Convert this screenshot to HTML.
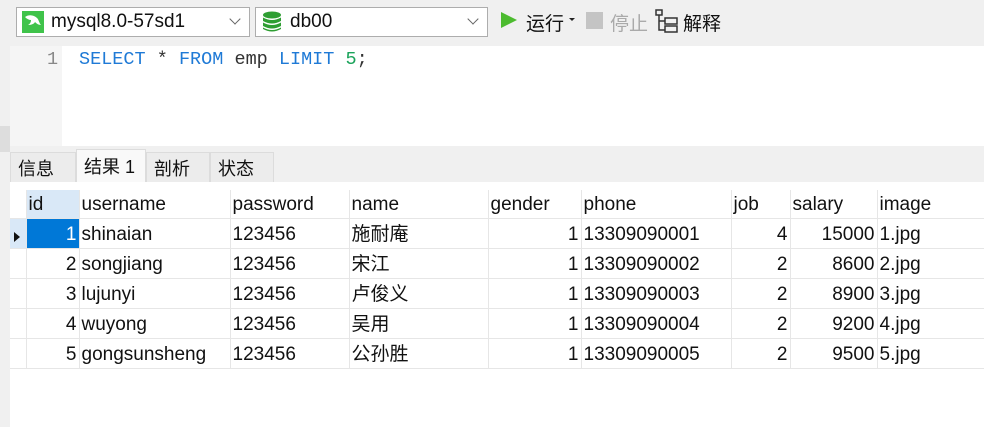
<!DOCTYPE html>
<html><head><meta charset="utf-8"><style>
*{margin:0;padding:0;box-sizing:border-box}
body{width:984px;height:427px;overflow:hidden;background:#f0f0f0;font-family:"Liberation Sans","Noto Sans CJK SC",sans-serif;font-size:19px;color:#111;position:relative}
.abs{position:absolute}
.sel{position:absolute;top:7px;height:30px;background:#fff;border:1px solid #adadad}
.sel .t{position:absolute;left:34px;top:3px;font-size:19px}
.chev{position:absolute;right:10px;top:7px;width:8px;height:8px;border-right:1.3px solid #666;border-bottom:1.3px solid #666;transform:rotate(45deg)}
.grid{position:absolute;left:10px;top:182px;width:974px;height:245px;background:#fff}
table{border-collapse:collapse;position:absolute;left:0;top:8px;font-size:19px;table-layout:fixed}
td{height:30px;line-height:26px;padding:3px 2px 0;border-right:1px solid #e6e6e6;border-bottom:1px solid #e6e6e6;white-space:nowrap;overflow:hidden}
tr.h td{height:28px;line-height:24px}
.r{text-align:right}
.tab{position:absolute;top:152px;height:30px;background:#ececec;border:1px solid #dcdcdc;border-bottom:none;padding:2px 0 0 7px;font-size:18px}
</style></head><body>
<div class="sel" style="left:16px;width:234px">
 <svg class="abs" style="left:5px;top:3px" width="22" height="22"><rect width="22" height="22" fill="#3fc34a"/><path d="M3 6c4-3 9-2 12 1 2 2 2 5 4 7-3 0-5-2-6-3-1 2-4 3-7 3 2-1 3-3 3-5-2 0-4-1-6-3z" fill="#fff"/></svg>
 <span class="t">mysql8.0-57sd1</span><span class="chev"></span></div>
<div class="sel" style="left:255px;width:233px">
 <svg class="abs" style="left:5px;top:3px" width="22" height="22"><ellipse cx="11" cy="4" rx="9" ry="3.5" fill="#2f9e33"/><path d="M2 6.5q9 5 18 0v3.5q-9 5-18 0z M2 11.5q9 5 18 0v3.5q-9 5-18 0z M2 16.5q9 5 18 0v1.5q-9 5-18 0z" fill="#2f9e33"/></svg>
 <span class="t">db00</span><span class="chev"></span></div>
<svg class="abs" style="left:500px;top:11px" width="18" height="18"><path d="M1 1L17 9L1 17z" fill="#4cbb2f"/></svg>
<span class="abs" style="left:526px;top:9px;font-size:19px">运行</span>
<svg class="abs" style="left:569px;top:18px" width="6" height="4"><path d="M0 0h6l-3 3z" fill="#222"/></svg>
<div class="abs" style="left:586px;top:12px;width:17px;height:17px;background:#c4c4c4"></div>
<span class="abs" style="left:610px;top:9px;font-size:19px;color:#aaa">停止</span>
<svg class="abs" style="left:655px;top:9px" width="26" height="24" fill="none" stroke="#333" stroke-width="1.5"><rect x="1" y="1" width="6" height="5"/><path d="M4 6v15h6M4 12h6"/><rect x="10" y="9" width="12" height="6"/><rect x="10" y="17" width="12" height="6"/></svg>
<span class="abs" style="left:683px;top:9px;font-size:19px">解释</span>
<div class="abs" style="left:10px;top:46px;width:974px;height:100px;background:#fff"></div>
<div class="abs" style="left:10px;top:46px;width:52px;height:100px;background:#f5f5f5"></div>
<span class="abs" style="left:47px;top:49px;color:#888;font-family:'Liberation Mono',monospace;font-size:18.5px">1</span>
<span class="abs" style="left:79px;top:49px;font-family:'Liberation Mono',monospace;font-size:18.5px;color:#333"><span style="color:#1f7ad6">SELECT</span> * <span style="color:#1f7ad6">FROM</span> emp <span style="color:#1f7ad6">LIMIT</span> <span style="color:#1aa35a">5</span>;</span>
<div class="abs" style="left:0;top:126px;width:10px;height:26px;background:#ddd"></div>
<div class="tab" style="left:10px;width:66px">信息</div>
<div class="tab" style="left:76px;width:70px;background:#f9f9f9;top:149px;height:33px;padding-top:3px">结果 1</div>
<div class="tab" style="left:146px;width:64px">剖析</div>
<div class="tab" style="left:210px;width:64px">状态</div>
<div class="grid"><table style="width:974px">
<colgroup><col style="width:16px"><col style="width:53px"><col style="width:151px"><col style="width:119px"><col style="width:139px"><col style="width:93px"><col style="width:150px"><col style="width:59px"><col style="width:87px"><col style="width:107px"></colgroup>
<tr class="h"><td></td><td style="background:#d9e8f7">id</td><td>username</td><td>password</td><td>name</td><td>gender</td><td>phone</td><td>job</td><td>salary</td><td style="border-right:none">image</td></tr>
<tr><td style="background:#d9e8f7;padding:0"><svg width="14" height="14" style="display:block;margin-top:8px"><path d="M4 2l6 5-6 5z" fill="#111"/></svg></td><td class="r" style="background:#0078d7;color:#fff">1</td><td>shinaian</td><td>123456</td><td>施耐庵</td><td class="r">1</td><td>13309090001</td><td class="r">4</td><td class="r">15000</td><td style="border-right:none">1.jpg</td></tr>
<tr><td></td><td class="r">2</td><td>songjiang</td><td>123456</td><td>宋江</td><td class="r">1</td><td>13309090002</td><td class="r">2</td><td class="r">8600</td><td style="border-right:none">2.jpg</td></tr>
<tr><td></td><td class="r">3</td><td>lujunyi</td><td>123456</td><td>卢俊义</td><td class="r">1</td><td>13309090003</td><td class="r">2</td><td class="r">8900</td><td style="border-right:none">3.jpg</td></tr>
<tr><td></td><td class="r">4</td><td>wuyong</td><td>123456</td><td>吴用</td><td class="r">1</td><td>13309090004</td><td class="r">2</td><td class="r">9200</td><td style="border-right:none">4.jpg</td></tr>
<tr><td></td><td class="r">5</td><td>gongsunsheng</td><td>123456</td><td>公孙胜</td><td class="r">1</td><td>13309090005</td><td class="r">2</td><td class="r">9500</td><td style="border-right:none">5.jpg</td></tr>
</table></div>
</body></html>
